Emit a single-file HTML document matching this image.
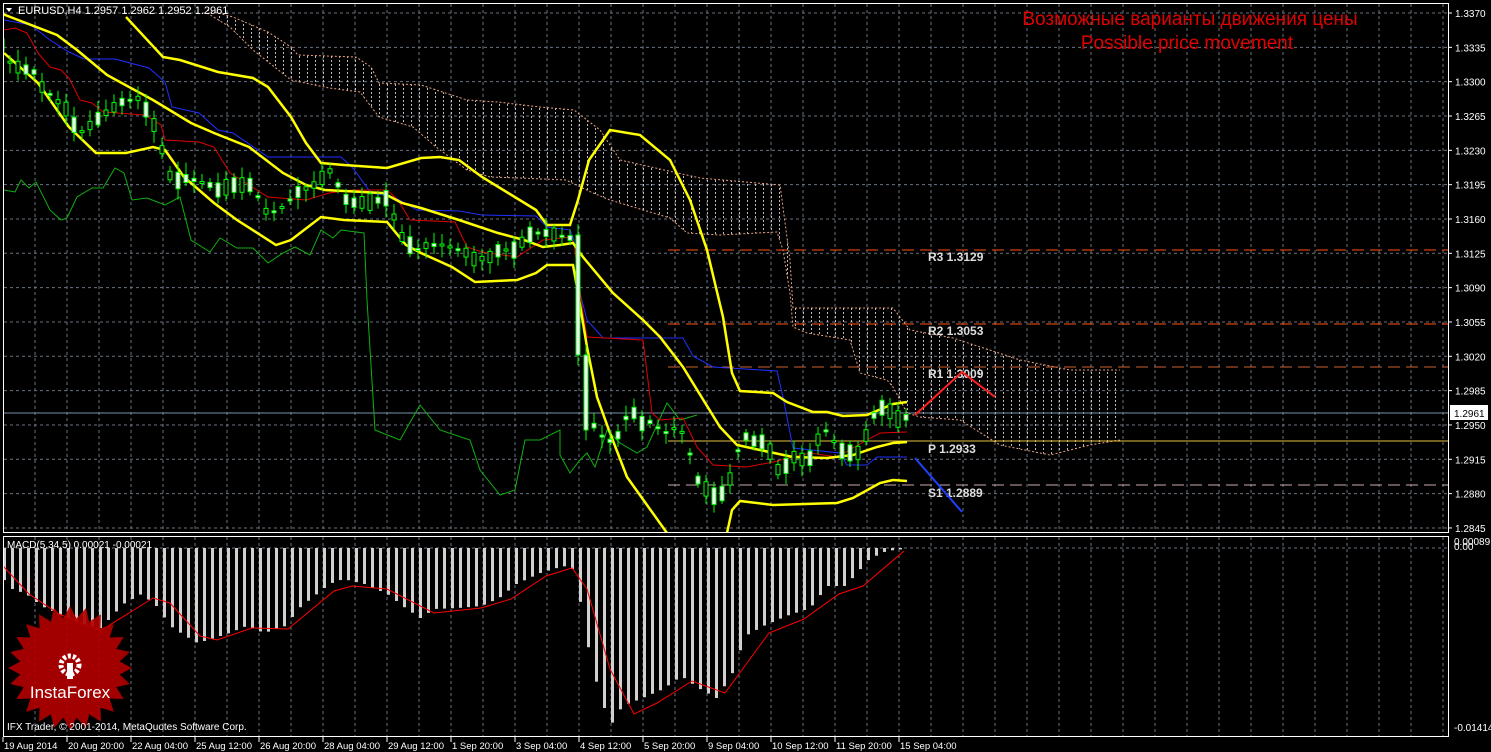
<!DOCTYPE html>
<html><head><meta charset="utf-8"><style>
body{margin:0;background:#000;width:1491px;height:752px;overflow:hidden;font-family:"Liberation Sans",sans-serif}
svg{display:block}
text{font-family:"Liberation Sans",sans-serif}
</style></head><body>
<svg id="s" width="1491" height="752" xmlns="http://www.w3.org/2000/svg">
<defs>
<pattern id="hat" width="8" height="4" patternUnits="userSpaceOnUse"><rect x="3" y="0" width="1" height="2" fill="#ddd"/></pattern>
<clipPath id="main"><rect x="4" y="4" width="1444" height="528"/></clipPath>
</defs>
<rect width="1491" height="752" fill="#000"/>
<g id="grid"></g>
<g clip-path="url(#main)">
<polygon fill="url(#hat)" opacity="0.85" points="207,10 233,17 268,32 291,47 298,55 356,57 371,67 379,83 421,85 467,100 498,102 540,107 574,110 600,130 620,160 700,178 780,185 790,260 793,308 893,308 910,330 953,338 1020,360 1070,370 1120,370 1120,440 1090,445 1050,455 1000,445 960,420 920,417 907,413 893,387 887,380 860,373 850,340 807,333 793,327 790,293 783,250 777,232 720,235 687,233 670,218 610,200 593,193 566,180 520,178 490,177 467,170 436,147 413,127 379,117 360,92 329,88 291,80 253,50 230,27 207,13"/>
<polyline fill="none" stroke="#e8a080" stroke-dasharray="2,2" points="207,10 233,17 268,32 291,47 298,55 356,57 371,67 379,83 421,85 467,100 498,102 540,107 574,110 600,130 620,160 700,178 780,185 790,260 793,308 893,308 910,330 953,338 1020,360 1070,370 1120,370"/>
<polyline fill="none" stroke="#e8a080" stroke-dasharray="2,2" points="207,13 230,27 253,50 291,80 329,88 360,92 379,117 413,127 436,147 467,170 490,177 520,178 566,180 593,193 610,200 670,218 687,233 720,235 777,232 783,250 790,293 793,327 807,333 850,340 860,373 887,380 893,387 907,413 920,417 960,420 1000,445 1050,455 1090,445 1120,440"/>
</g>
<line x1="668" y1="250" x2="1448" y2="250" stroke="#ff5010" stroke-dasharray="12,6"/>
<line x1="668" y1="324" x2="1448" y2="324" stroke="#ff5010" stroke-dasharray="12,6"/>
<line x1="668" y1="367" x2="1448" y2="367" stroke="#d06030" stroke-dasharray="12,6"/>
<line x1="668" y1="441" x2="1448" y2="441" stroke="#e8c040"/>
<line x1="668" y1="485" x2="1448" y2="485" stroke="#c8a8a8" stroke-dasharray="12,6"/>
<line x1="3" y1="413" x2="1448" y2="413" stroke="#7890a8"/>
<g font-family="Liberation Mono" font-size="12" fill="#ddd" font-weight="bold">
<text x="928" y="261">R3 1.3129</text><text x="928" y="335">R2 1.3053</text>
<text x="928" y="378">R1 1.3009</text><text x="928" y="453">P 1.2933</text>
<text x="928" y="497">S1 1.2889</text></g>
<g clip-path="url(#main)">
<polyline fill="none" stroke="#10b010" stroke-width="1" points="4,190 15,192 21,180 29,188 36,182 50,210 61,220 67,218 77,197 92,188 103,188 115,168 124,173 132,200 147,198 165,205 180,197 191,240 210,252 220,238 237,248 253,248 268,263 283,253 295,247 310,255 321,230 333,238 341,230 364,233 367,300 375,430 400,440 420,405 440,430 470,440 480,470 500,495 515,490 525,440 540,440 560,430 560,455 570,473 580,460 587,453 595,467 607,430 620,443 637,453 647,447 667,403 680,420 697,415"/>
<polyline fill="none" stroke="#2030ff" points="4,20 31,25 50,40 69,52 84,59 115,59 149,68 165,82 172,107 199,113 218,130 233,133 268,157 341,157 352,167 371,193 394,197 417,210 459,211 482,215 536,216 547,227 570,230 574,240 580,293 587,320 603,338 683,338 693,356 713,367 777,371 783,397 793,448 840,453 847,465 867,465 877,457 907,457"/>
<polyline fill="none" stroke="#e00000" points="4,30 15,28 27,33 38,53 50,67 61,70 69,78 80,100 92,103 103,112 145,115 161,125 165,140 199,142 214,147 230,173 268,197 306,200 329,193 352,190 387,190 398,200 410,220 455,222 467,247 482,252 517,257 543,240 570,237 574,243 583,313 587,337 643,340 652,413 660,420 683,418 697,447 713,465 747,467 773,462 810,453 837,457 867,440 880,433 907,432"/>
<g fill="none" stroke="#ffff00" stroke-width="2.5">
<polyline points="126,17 163,57 180,60 218,72 253,78 268,87 291,117 306,143 321,163 344,165 387,168 421,158 440,157 459,160 482,177 536,210 547,225 570,225 578,200 589,160 610,130 640,135 670,160 690,200 707,250 723,317 732,373 740,391 773,393 787,402 813,412 827,412 843,416 867,415 893,404 907,402"/>
<polyline points="0,13 57,35 77,50 107,75 153,100 191,123 214,133 249,147 283,173 306,185 325,190 383,193 402,203 421,208 459,220 498,233 524,240 543,247 560,245 573,243 583,257 613,293 643,320 660,337 683,367 720,427 737,445 760,450 793,457 827,458 853,455 877,447 893,443 907,442"/>
<polyline points="4,53 38,83 69,127 96,153 126,153 153,147 165,150 184,177 214,203 237,220 276,245 291,240 321,217 344,220 387,222 406,245 421,253 452,267 475,282 517,280 536,273 547,265 573,265 577,287 587,347 597,397 610,433 627,477 667,533"/>
<polyline points="727,533 732,510 740,501 773,505 837,503 853,498 880,483 893,480 907,481"/>
</g>
<g id="candles"></g>
</g>
<polyline fill="none" stroke="#ff2020" stroke-width="2" points="915,415 962,372 995,397"/>
<line x1="915" y1="458" x2="962" y2="512" stroke="#2040ff" stroke-width="2"/>
<g id="macd"></g>
<rect x="3.5" y="3.5" width="1445" height="529" fill="none" stroke="#fff"/>
<rect x="3.5" y="536.5" width="1445" height="200" fill="none" stroke="#fff"/>
<g font-size="10" fill="#fff" id="ax"></g>
<rect x="1450" y="405" width="38" height="15" fill="#fff"/>
<text x="1454" y="417" font-size="10" fill="#000">1.2961</text>
<text x="1454" y="545" font-size="10" fill="#fff">0.00089</text>
<text x="1454" y="550" font-size="10" fill="#fff">0.00</text>
<text x="1454" y="731" font-size="10" fill="#fff">-0.01414</text>
<text x="18" y="14" font-size="11" fill="#fff">EURUSD,H4  1.2957 1.2962 1.2952 1.2961</text>
<polygon points="6,8 12,8 9,12" fill="#fff"/>
<polygon id="star" fill="#b00000" opacity="0.92"/>
<text x="7" y="548" font-size="10" fill="#fff">MACD(5,34,5) 0.00021 -0.00021</text>
<text x="1190" y="25" font-size="19" fill="#e00000" text-anchor="middle">Возможные варианты движения цены</text>
<text x="1187" y="49" font-size="19" fill="#e00000" text-anchor="middle">Possible price movement</text>
<g fill="#fff"><circle cx="70" cy="665" r="9" fill="none" stroke="#fff" stroke-width="5" stroke-dasharray="3,2"/><rect x="67" y="663" width="6" height="16"/></g>
<text x="70" y="698" font-size="17" fill="#fff" text-anchor="middle">InstaForex</text>
<text x="7" y="730" font-size="10" fill="#fff">IFX Trader, © 2001-2014, MetaQuotes Software Corp.</text>
</svg>
<script>
(function(){
var N='http://www.w3.org/2000/svg';
function el(p,t,a){var e=document.createElementNS(N,t);for(var k in a)e.setAttribute(k,a[k]);p.appendChild(e);return e;}
var g=document.getElementById('grid'),ax=document.getElementById('ax');
for(var x=35;x<1448;x+=32){el(g,'line',{x1:x,y1:4,x2:x,y2:532,stroke:'#6a7480','stroke-dasharray':'3,3'});el(g,'line',{x1:x,y1:537,x2:x,y2:736,stroke:'#6a7480','stroke-dasharray':'3,3'});}
for(var i=0;i<16;i++){var y=13+i*34.33;el(g,'line',{x1:4,y1:y,x2:1448,y2:y,stroke:'#6a7480','stroke-dasharray':'3,3'});
var t=el(ax,'text',{x:1455,y:y+4});t.textContent=(1.3370-i*0.0035).toFixed(4);el(ax,'line',{x1:1448,y1:y,x2:1452,y2:y,stroke:'#fff'});}
el(g,'line',{x1:4,y1:548,x2:1448,y2:548,stroke:'#6a7480','stroke-dasharray':'3,3'});
var labs=['19 Aug 2014','20 Aug 20:00','22 Aug 04:00','25 Aug 12:00','26 Aug 20:00','28 Aug 04:00','29 Aug 12:00','1 Sep 20:00','3 Sep 04:00','4 Sep 12:00','5 Sep 20:00','9 Sep 04:00','10 Sep 12:00','11 Sep 20:00','15 Sep 04:00'];
labs.forEach(function(l,i){var x=3+i*64;el(ax,'line',{x1:x,y1:737,x2:x,y2:742,stroke:'#fff'});var t=el(ax,'text',{x:x+1,y:749,'font-size':'9.5'});t.textContent=l;});
function interp(pts,x){if(x<=pts[0][0])return pts[0][1];for(var i=0;i<pts.length-1;i++){if(x>=pts[i][0]&&x<=pts[i+1][0]){var f=(x-pts[i][0])/(pts[i+1][0]-pts[i][0]);return pts[i][1]+f*(pts[i+1][1]-pts[i][1]);}}return pts[pts.length-1][1];}
var mid=[[4,45],[11,65],[34,72],[42,87],[67,110],[75,127],[84,133],[92,123],[107,112],[122,102],[140,98],[155,127],[172,182],[188,178],[210,185],[218,190],[233,185],[251,185],[260,200],[268,215],[283,207],[298,192],[314,185],[323,177],[331,170],[339,187],[348,203],[371,202],[387,198],[394,217],[404,242],[419,250],[427,245],[444,245],[459,250],[467,253],[475,260],[490,257],[499,250],[515,250],[524,240],[532,233],[547,233],[570,238],[578,290],[587,395],[595,430],[603,437],[612,442],[620,433],[628,413],[635,413],[643,425],[652,421],[660,430],[667,433],[675,428],[683,433],[692,460],[698,480],[707,490],[715,497],[723,493],[731,477],[739,447],[747,435],[755,442],[763,442],[771,453],[779,472],[787,465],[795,456],[803,460],[811,458],[819,437],[827,430],[835,443],[843,452],[851,453],[859,453],[867,433],[875,413],[883,407],[891,412],[899,420],[907,417]];
var c=document.getElementById('candles'),seed=11;function r(){seed=(seed*9301+49297)%233280;return seed/233280;}
for(var x=2;x<910;x+=8){var m=interp(mid,x),h=3+r()*14,tp=m-h/2,bh=h;if(r()<0.3){bh=2;tp=m-1;}
if(x==578){tp=235;bh=120;} if(x==586){tp=355;bh=75;}
el(c,'line',{x1:x,y1:tp-3-r()*9,x2:x,y2:tp+bh+3+r()*9,stroke:'#00ff00'});
el(c,'rect',{x:x-2,y:tp,width:4,height:bh,fill:r()>0.4?'#fff':'#000',stroke:'#00ff00','stroke-width':1});}
var hb=[[3,579],[12,589],[26,594],[41,606],[59,614],[82,624],[100,628],[109,619],[123,604],[141,594],[156,606],[170,626],[185,636],[197,643],[211,639],[229,633],[246,626],[264,633],[285,626],[299,608],[314,596],[329,584],[343,579],[364,584],[387,594],[405,608],[420,618],[434,609],[458,608],[481,606],[499,598],[516,584],[540,573],[563,566],[572,569],[581,606],[590,659],[599,693],[610,726],[622,706],[640,699],[663,689],[681,676],[698,688],[716,698],[731,676],[745,636],[763,626],[786,616],[810,608],[827,586],[845,586],[869,559],[886,551],[904,549]];
var mg=document.getElementById('macd');
for(var x=4;x<906;x+=8){var v=interp(hb,x)-548;if(v>0.5)el(mg,'rect',{x:x-1,y:548,width:3,height:v,fill:'#d0d0d0'});}
el(mg,'polyline',{points:'3,566 29,594 59,614 100,631 129,613 153,598 170,603 200,636 217,640 252,628 288,629 334,591 352,586 387,589 434,613 481,608 511,599 546,576 572,568 587,589 610,669 634,714 657,703 692,681 725,693 769,633 804,619 839,594 863,586 904,551',fill:'none',stroke:'#ff0000'});
var sp=[];for(var i=0;i<48;i++){var a=i*Math.PI/24,rr=i%2?50:62;sp.push((70+rr*Math.cos(a))+','+(668+rr*Math.sin(a)));}
document.getElementById('star').setAttribute('points',sp.join(' '));
})();
</script>
</body></html>
